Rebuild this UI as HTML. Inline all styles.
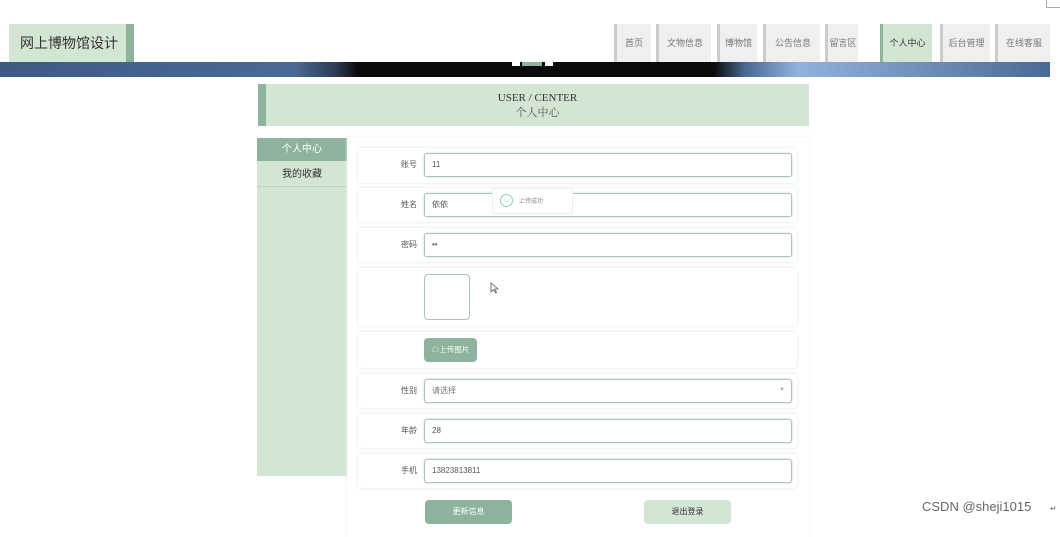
<!DOCTYPE html>
<html><head><meta charset="utf-8"><style>
*{box-sizing:border-box;margin:0;padding:0}
body{width:1060px;height:524px;background:#fff;position:relative;overflow:hidden;font-family:"Liberation Sans","Noto Sans CJK SC",sans-serif;color:#333}
.abs{position:absolute}
.logo{left:9px;top:24px;width:125px;height:38px;background:#d3e5d3;border-right:8px solid #8db39c;font-size:14px;line-height:38px;padding-left:11px;color:#333}
.nav{top:24px;height:38px;background:#efefef;border-left:3px solid #ccc;font-size:9px;color:#777;text-align:center;line-height:38px}
.banner{left:0;top:62px;width:1050px;height:15px;background:linear-gradient(90deg,#3d5a85 0%,#4a6a95 28%,#2c3a55 32%,#0b0b0d 34%,#0b0b0d 68%,#4a6a95 71%,#8fb2de 76%,#6f8fb8 88%,#4a6a95 100%)}
.title{left:258px;top:84px;width:551px;height:42px;background:#d3e5d3;border-left:8px solid #8db39c;text-align:center;font-family:"Liberation Serif","Noto Serif CJK SC",serif;font-size:11px;color:#333;padding-top:7px;line-height:15px}
.side{left:257px;top:138px;width:90px;height:338px;background:#d3e5d3}
.form{left:347px;top:137px;width:462px;height:400px;background:#fff;box-shadow:0 0 3px #e6eee6}
.row{left:358px;width:439px;background:#fff;box-shadow:0 0 3px #dde5dd;border-radius:3px}
.lab{font-size:8px;color:#555;width:60px;text-align:right;line-height:10px}
.inp{left:424px;width:368px;height:24px;border:1.5px solid #a9c8b3;border-radius:3px;font-size:8px;color:#555;line-height:21px;padding-left:7px;background:#fff;box-shadow:0 0 2px #c5d8ca}
.btn{top:500px;width:87px;height:24px;border-radius:4px;font-size:8px;text-align:center;line-height:24px}
</style></head><body>
<div class="abs logo">网上博物馆设计</div>
<div class="abs nav" style="left:614px;width:37px">首页</div>
<div class="abs nav" style="left:656px;width:55px">文物信息</div>
<div class="abs nav" style="left:717px;width:40px">博物馆</div>
<div class="abs nav" style="left:763px;width:57px">公告信息</div>
<div class="abs nav" style="left:825px;width:33px">留言区</div>
<div class="abs nav" style="left:880px;width:52px;background:#d3e5d3;border-left-color:#8db39c;color:#333">个人中心</div>
<div class="abs nav" style="left:940px;width:50px">后台管理</div>
<div class="abs nav" style="left:995px;width:55px">在线客服</div>
<div class="abs" style="left:1046px;top:0;width:14px;height:8px;border-left:1px solid #aaa;border-bottom:1px solid #aaa"></div>
<div class="abs banner"></div>
<div class="abs" style="left:512px;top:62px;width:8px;height:4px;background:#fff"></div>
<div class="abs" style="left:522px;top:62px;width:20px;height:4px;background:#8db39c"></div>
<div class="abs" style="left:545px;top:62px;width:8px;height:4px;background:#fff"></div>
<div class="abs title">USER / CENTER<br><span style="font-size:11px;color:#555">个人中心</span></div>
<div class="abs side"></div>
<div class="abs" style="left:257px;top:138px;width:90px;height:23px;background:#8db39c;color:#fff;font-size:10px;text-align:center;line-height:24px">个人中心</div>
<div class="abs" style="left:257px;top:161px;width:90px;height:26px;border-bottom:1px solid #bcd2bf;color:#333;font-size:10px;text-align:center;line-height:27px">我的收藏</div>
<div class="abs form"></div>

<div class="abs row" style="top:148px;height:35px"></div>
<div class="abs lab" style="left:357px;top:160px">账号</div>
<div class="abs inp" style="top:153px">11</div>

<div class="abs row" style="top:188px;height:34px"></div>
<div class="abs lab" style="left:357px;top:200px">姓名</div>
<div class="abs inp" style="top:193px">依依</div>

<div class="abs row" style="top:228px;height:34px"></div>
<div class="abs lab" style="left:357px;top:240px">密码</div>
<div class="abs inp" style="top:233px">••</div>

<div class="abs row" style="top:268px;height:58px"></div>
<div class="abs" style="left:424px;top:274px;width:46px;height:46px;border:1.5px solid #a9c8b3;border-radius:4px"></div>
<svg class="abs" style="left:490px;top:282px" width="9" height="12" viewBox="0 0 9 12"><path d="M1 1 L1 10 L3.5 7.5 L5.5 11 L6.5 10.5 L4.8 7 L8 7 Z" fill="#fff" stroke="#555" stroke-width="0.8"/></svg>

<div class="abs row" style="top:332px;height:36px"></div>
<div class="abs" style="left:424px;top:338px;width:53px;height:24px;background:#8db39c;border-radius:4px;color:#fff;font-size:7.5px;line-height:24px;text-align:center">☁上传图片</div>

<div class="abs row" style="top:374px;height:34px"></div>
<div class="abs lab" style="left:357px;top:386px">性别</div>
<div class="abs inp" style="top:379px;color:#777">请选择<span style="position:absolute;right:6px;color:#aaa;font-size:6px">▼</span></div>

<div class="abs row" style="top:414px;height:34px"></div>
<div class="abs lab" style="left:357px;top:426px">年龄</div>
<div class="abs inp" style="top:419px">28</div>

<div class="abs row" style="top:454px;height:34px"></div>
<div class="abs lab" style="left:357px;top:466px">手机</div>
<div class="abs inp" style="top:459px">13823813811</div>

<div class="abs btn" style="left:425px;background:#8db39c;color:#fff">更新信息</div>
<div class="abs btn" style="left:644px;background:#d3e5d3;color:#333">退出登录</div>

<div class="abs" style="left:492px;top:188px;width:81px;height:26px;background:#fff;border:1px solid #eee;font-size:6px;color:#888;line-height:26px;padding-left:26px">上传成功</div>
<div class="abs" style="left:500px;top:194px;width:13px;height:13px;border:1.3px solid #8fd0b0;border-radius:50%;color:#8fd0b0;font-size:7px;line-height:10px;text-align:center">◡</div>

<div class="abs" style="left:922px;top:499px;font-size:13px;color:#666">CSDN @sheji1015</div>
<div class="abs" style="left:1050px;top:504px;font-size:8px;color:#666">↵</div>
</body></html>
